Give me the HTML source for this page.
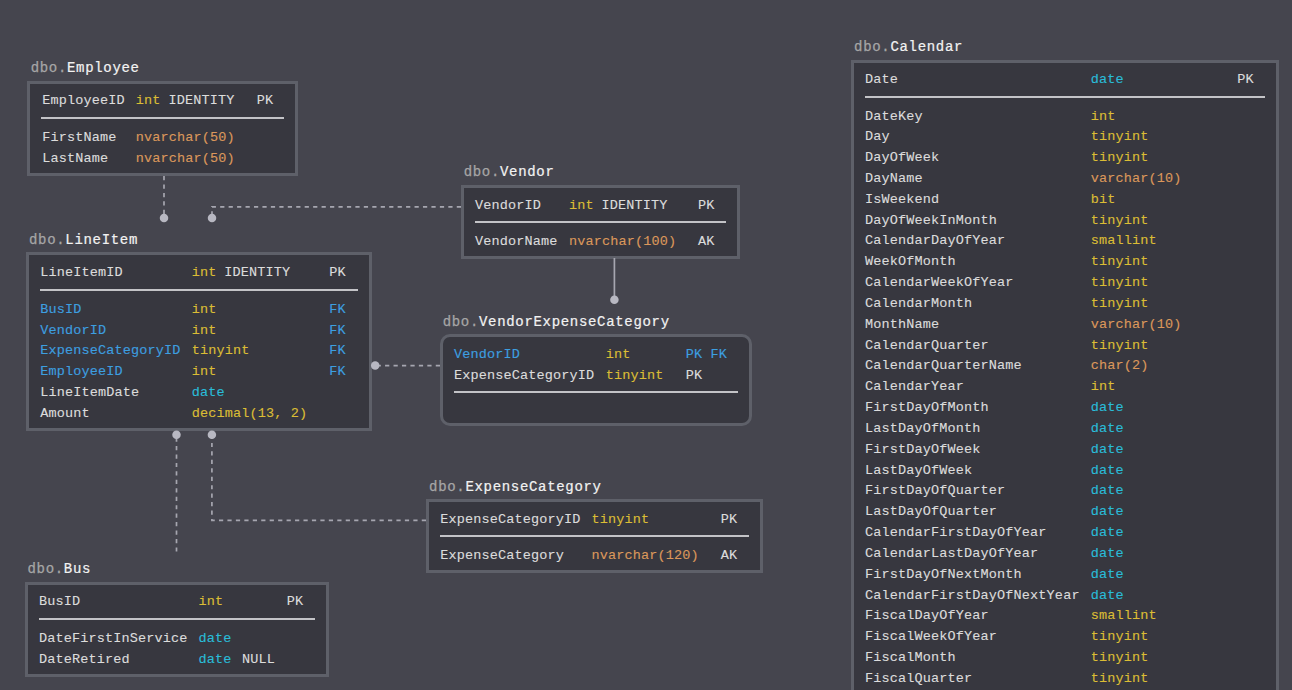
<!DOCTYPE html><html><head><meta charset="utf-8"><style>
html,body{margin:0;padding:0;}
body{width:1292px;height:690px;overflow:hidden;position:relative;background:#45454e;font-family:"Liberation Mono",monospace;}
.box{position:absolute;box-sizing:border-box;background:#37373f;border:3px solid #5e6069;}
.s{position:absolute;white-space:pre;font-size:13.5px;line-height:20px;letter-spacing:0.15px;-webkit-text-stroke:0.12px currentColor;}
.t{position:absolute;white-space:pre;font-size:14px;line-height:20px;letter-spacing:0.68px;color:#a6a6a6;-webkit-text-stroke:0.25px currentColor;}
.t b{font-weight:normal;color:#f2f2f2;-webkit-text-stroke:0.2px currentColor;}
.sep{position:absolute;height:2px;background:#c3c3c7;}
svg{position:absolute;left:0;top:0;}
</style></head><body>
<div class="box" style="left:27.0px;top:81.0px;width:271.3px;height:95.0px;"></div>
<div class="t" style="left:30.70px;top:58.07px">dbo.<b>Employee</b></div>
<div class="s" style="left:42.20px;top:91.31px;color:#dcdcdc">EmployeeID</div>
<div class="s" style="left:135.70px;top:91.31px;color:#dbbd35">int</div>
<div class="s" style="left:168.40px;top:91.31px;color:#dcdcdc">IDENTITY</div>
<div class="s" style="left:256.70px;top:91.31px;color:#dcdcdc">PK</div>
<div class="s" style="left:42.20px;top:128.01px;color:#dcdcdc">FirstName</div>
<div class="s" style="left:135.70px;top:128.01px;color:#db975b">nvarchar(50)</div>
<div class="s" style="left:42.20px;top:148.61px;color:#dcdcdc">LastName</div>
<div class="s" style="left:135.70px;top:148.61px;color:#db975b">nvarchar(50)</div>
<div class="sep" style="left:41.0px;top:117.0px;width:243.4px"></div>
<div class="box" style="left:26.0px;top:252.0px;width:346.0px;height:179.0px;"></div>
<div class="t" style="left:29.00px;top:229.87px">dbo.<b>LineItem</b></div>
<div class="s" style="left:40.20px;top:263.41px;color:#dcdcdc">LineItemID</div>
<div class="s" style="left:191.70px;top:263.41px;color:#dbbd35">int</div>
<div class="s" style="left:224.20px;top:263.41px;color:#dcdcdc">IDENTITY</div>
<div class="s" style="left:329.30px;top:263.41px;color:#dcdcdc">PK</div>
<div class="s" style="left:40.20px;top:299.81px;color:#3d9fe0">BusID</div>
<div class="s" style="left:191.70px;top:299.81px;color:#dbbd35">int</div>
<div class="s" style="left:329.30px;top:299.81px;color:#3d9fe0">FK</div>
<div class="s" style="left:40.20px;top:320.51px;color:#3d9fe0">VendorID</div>
<div class="s" style="left:191.70px;top:320.51px;color:#dbbd35">int</div>
<div class="s" style="left:329.30px;top:320.51px;color:#3d9fe0">FK</div>
<div class="s" style="left:40.20px;top:341.31px;color:#3d9fe0">ExpenseCategoryID</div>
<div class="s" style="left:191.70px;top:341.31px;color:#dbbd35">tinyint</div>
<div class="s" style="left:329.30px;top:341.31px;color:#3d9fe0">FK</div>
<div class="s" style="left:40.20px;top:362.01px;color:#3d9fe0">EmployeeID</div>
<div class="s" style="left:191.70px;top:362.01px;color:#dbbd35">int</div>
<div class="s" style="left:329.30px;top:362.01px;color:#3d9fe0">FK</div>
<div class="s" style="left:40.20px;top:382.81px;color:#dcdcdc">LineItemDate</div>
<div class="s" style="left:191.70px;top:382.81px;color:#2abcd8">date</div>
<div class="s" style="left:40.20px;top:403.51px;color:#dcdcdc">Amount</div>
<div class="s" style="left:191.70px;top:403.51px;color:#dbbd35">decimal(13, 2)</div>
<div class="sep" style="left:40.0px;top:289.0px;width:317.8px"></div>
<div class="box" style="left:461.0px;top:185.0px;width:279.0px;height:74.0px;"></div>
<div class="t" style="left:463.70px;top:162.07px">dbo.<b>Vendor</b></div>
<div class="s" style="left:475.10px;top:196.41px;color:#dcdcdc">VendorID</div>
<div class="s" style="left:569.00px;top:196.41px;color:#dbbd35">int</div>
<div class="s" style="left:601.60px;top:196.41px;color:#dcdcdc">IDENTITY</div>
<div class="s" style="left:698.00px;top:196.41px;color:#dcdcdc">PK</div>
<div class="s" style="left:475.10px;top:232.41px;color:#dcdcdc">VendorName</div>
<div class="s" style="left:569.00px;top:232.41px;color:#db975b">nvarchar(100)</div>
<div class="s" style="left:698.00px;top:232.41px;color:#dcdcdc">AK</div>
<div class="sep" style="left:475.0px;top:221.0px;width:251.3px"></div>
<div class="box" style="left:440.0px;top:334.0px;width:312.0px;height:92.0px;border-radius:10px;"></div>
<div class="t" style="left:442.70px;top:311.87px">dbo.<b>VendorExpenseCategory</b></div>
<div class="s" style="left:454.10px;top:345.21px;color:#3d9fe0">VendorID</div>
<div class="s" style="left:605.70px;top:345.21px;color:#dbbd35">int</div>
<div class="s" style="left:685.70px;top:345.21px;color:#3d9fe0">PK FK</div>
<div class="s" style="left:454.10px;top:366.01px;color:#dcdcdc">ExpenseCategoryID</div>
<div class="s" style="left:605.70px;top:366.01px;color:#dbbd35">tinyint</div>
<div class="s" style="left:685.70px;top:366.01px;color:#dcdcdc">PK</div>
<div class="sep" style="left:453.8px;top:391.0px;width:284.5px"></div>
<div class="box" style="left:426.0px;top:499.0px;width:337.0px;height:74.0px;"></div>
<div class="t" style="left:429.10px;top:477.07px">dbo.<b>ExpenseCategory</b></div>
<div class="s" style="left:440.30px;top:510.01px;color:#dcdcdc">ExpenseCategoryID</div>
<div class="s" style="left:591.50px;top:510.01px;color:#dbbd35">tinyint</div>
<div class="s" style="left:720.70px;top:510.01px;color:#dcdcdc">PK</div>
<div class="s" style="left:440.30px;top:546.01px;color:#dcdcdc">ExpenseCategory</div>
<div class="s" style="left:591.50px;top:546.01px;color:#db975b">nvarchar(120)</div>
<div class="s" style="left:720.70px;top:546.01px;color:#dcdcdc">AK</div>
<div class="sep" style="left:440.0px;top:535.0px;width:309.0px"></div>
<div class="box" style="left:25.0px;top:582.0px;width:304.0px;height:95.0px;"></div>
<div class="t" style="left:27.50px;top:558.97px">dbo.<b>Bus</b></div>
<div class="s" style="left:39.00px;top:592.01px;color:#dcdcdc">BusID</div>
<div class="s" style="left:198.60px;top:592.01px;color:#dbbd35">int</div>
<div class="s" style="left:286.70px;top:592.01px;color:#dcdcdc">PK</div>
<div class="s" style="left:39.00px;top:629.21px;color:#dcdcdc">DateFirstInService</div>
<div class="s" style="left:198.60px;top:629.21px;color:#2abcd8">date</div>
<div class="s" style="left:39.00px;top:649.61px;color:#dcdcdc">DateRetired</div>
<div class="s" style="left:198.60px;top:649.61px;color:#2abcd8">date</div>
<div class="s" style="left:242.00px;top:649.61px;color:#dcdcdc">NULL</div>
<div class="sep" style="left:38.8px;top:618.0px;width:276.2px"></div>
<div class="box" style="left:851.2px;top:60.3px;width:428.0px;height:700.0px;"></div>
<div class="t" style="left:854.10px;top:36.87px">dbo.<b>Calendar</b></div>
<div class="s" style="left:865.10px;top:70.41px;color:#dcdcdc">Date</div>
<div class="s" style="left:1090.70px;top:70.41px;color:#2abcd8">date</div>
<div class="s" style="left:1237.30px;top:70.41px;color:#dcdcdc">PK</div>
<div class="s" style="left:865.10px;top:106.51px;color:#dcdcdc">DateKey</div>
<div class="s" style="left:1090.70px;top:106.51px;color:#dbbd35">int</div>
<div class="s" style="left:865.10px;top:127.34px;color:#dcdcdc">Day</div>
<div class="s" style="left:1090.70px;top:127.34px;color:#dbbd35">tinyint</div>
<div class="s" style="left:865.10px;top:148.17px;color:#dcdcdc">DayOfWeek</div>
<div class="s" style="left:1090.70px;top:148.17px;color:#dbbd35">tinyint</div>
<div class="s" style="left:865.10px;top:169.00px;color:#dcdcdc">DayName</div>
<div class="s" style="left:1090.70px;top:169.00px;color:#db975b">varchar(10)</div>
<div class="s" style="left:865.10px;top:189.83px;color:#dcdcdc">IsWeekend</div>
<div class="s" style="left:1090.70px;top:189.83px;color:#dbbd35">bit</div>
<div class="s" style="left:865.10px;top:210.66px;color:#dcdcdc">DayOfWeekInMonth</div>
<div class="s" style="left:1090.70px;top:210.66px;color:#dbbd35">tinyint</div>
<div class="s" style="left:865.10px;top:231.49px;color:#dcdcdc">CalendarDayOfYear</div>
<div class="s" style="left:1090.70px;top:231.49px;color:#dbbd35">smallint</div>
<div class="s" style="left:865.10px;top:252.32px;color:#dcdcdc">WeekOfMonth</div>
<div class="s" style="left:1090.70px;top:252.32px;color:#dbbd35">tinyint</div>
<div class="s" style="left:865.10px;top:273.15px;color:#dcdcdc">CalendarWeekOfYear</div>
<div class="s" style="left:1090.70px;top:273.15px;color:#dbbd35">tinyint</div>
<div class="s" style="left:865.10px;top:293.98px;color:#dcdcdc">CalendarMonth</div>
<div class="s" style="left:1090.70px;top:293.98px;color:#dbbd35">tinyint</div>
<div class="s" style="left:865.10px;top:314.81px;color:#dcdcdc">MonthName</div>
<div class="s" style="left:1090.70px;top:314.81px;color:#db975b">varchar(10)</div>
<div class="s" style="left:865.10px;top:335.64px;color:#dcdcdc">CalendarQuarter</div>
<div class="s" style="left:1090.70px;top:335.64px;color:#dbbd35">tinyint</div>
<div class="s" style="left:865.10px;top:356.47px;color:#dcdcdc">CalendarQuarterName</div>
<div class="s" style="left:1090.70px;top:356.47px;color:#db975b">char(2)</div>
<div class="s" style="left:865.10px;top:377.30px;color:#dcdcdc">CalendarYear</div>
<div class="s" style="left:1090.70px;top:377.30px;color:#dbbd35">int</div>
<div class="s" style="left:865.10px;top:398.13px;color:#dcdcdc">FirstDayOfMonth</div>
<div class="s" style="left:1090.70px;top:398.13px;color:#2abcd8">date</div>
<div class="s" style="left:865.10px;top:418.96px;color:#dcdcdc">LastDayOfMonth</div>
<div class="s" style="left:1090.70px;top:418.96px;color:#2abcd8">date</div>
<div class="s" style="left:865.10px;top:439.79px;color:#dcdcdc">FirstDayOfWeek</div>
<div class="s" style="left:1090.70px;top:439.79px;color:#2abcd8">date</div>
<div class="s" style="left:865.10px;top:460.62px;color:#dcdcdc">LastDayOfWeek</div>
<div class="s" style="left:1090.70px;top:460.62px;color:#2abcd8">date</div>
<div class="s" style="left:865.10px;top:481.45px;color:#dcdcdc">FirstDayOfQuarter</div>
<div class="s" style="left:1090.70px;top:481.45px;color:#2abcd8">date</div>
<div class="s" style="left:865.10px;top:502.28px;color:#dcdcdc">LastDayOfQuarter</div>
<div class="s" style="left:1090.70px;top:502.28px;color:#2abcd8">date</div>
<div class="s" style="left:865.10px;top:523.11px;color:#dcdcdc">CalendarFirstDayOfYear</div>
<div class="s" style="left:1090.70px;top:523.11px;color:#2abcd8">date</div>
<div class="s" style="left:865.10px;top:543.94px;color:#dcdcdc">CalendarLastDayOfYear</div>
<div class="s" style="left:1090.70px;top:543.94px;color:#2abcd8">date</div>
<div class="s" style="left:865.10px;top:564.77px;color:#dcdcdc">FirstDayOfNextMonth</div>
<div class="s" style="left:1090.70px;top:564.77px;color:#2abcd8">date</div>
<div class="s" style="left:865.10px;top:585.60px;color:#dcdcdc">CalendarFirstDayOfNextYear</div>
<div class="s" style="left:1090.70px;top:585.60px;color:#2abcd8">date</div>
<div class="s" style="left:865.10px;top:606.43px;color:#dcdcdc">FiscalDayOfYear</div>
<div class="s" style="left:1090.70px;top:606.43px;color:#dbbd35">smallint</div>
<div class="s" style="left:865.10px;top:627.26px;color:#dcdcdc">FiscalWeekOfYear</div>
<div class="s" style="left:1090.70px;top:627.26px;color:#dbbd35">tinyint</div>
<div class="s" style="left:865.10px;top:648.09px;color:#dcdcdc">FiscalMonth</div>
<div class="s" style="left:1090.70px;top:648.09px;color:#dbbd35">tinyint</div>
<div class="s" style="left:865.10px;top:668.92px;color:#dcdcdc">FiscalQuarter</div>
<div class="s" style="left:1090.70px;top:668.92px;color:#dbbd35">tinyint</div>
<div class="sep" style="left:865.0px;top:96.0px;width:400.0px"></div>
<svg width="1292" height="690" viewBox="0 0 1292 690">
<path d="M164 176 V218" stroke="#a6a6b0" stroke-width="1.7" fill="none" stroke-dasharray="4.225 4.225"/>
<path d="M461 206.8 H212 V218" stroke="#a6a6b0" stroke-width="1.7" fill="none" stroke-dasharray="4.225 4.225"/>
<path d="M176.5 551.6 V434.7" stroke="#a6a6b0" stroke-width="1.7" fill="none" stroke-dasharray="4.225 4.225"/>
<path d="M426 520.3 H211.9 V434.7" stroke="#a6a6b0" stroke-width="1.7" fill="none" stroke-dasharray="4.225 4.225"/>
<path d="M440 365.6 H375.2" stroke="#a6a6b0" stroke-width="1.7" fill="none" stroke-dasharray="4.225 4.225"/>
<path d="M614.4 258 V299.7" stroke="#a6a6b0" stroke-width="1.7" fill="none"/>
<circle cx="164.0" cy="218.0" r="4.25" fill="#b8b8c2"/>
<circle cx="212.0" cy="218.0" r="4.25" fill="#b8b8c2"/>
<circle cx="176.5" cy="434.7" r="4.25" fill="#b8b8c2"/>
<circle cx="211.9" cy="434.7" r="4.25" fill="#b8b8c2"/>
<circle cx="375.2" cy="365.6" r="4.25" fill="#b8b8c2"/>
<circle cx="614.4" cy="299.7" r="4.25" fill="#b8b8c2"/>
</svg>
</body></html>
